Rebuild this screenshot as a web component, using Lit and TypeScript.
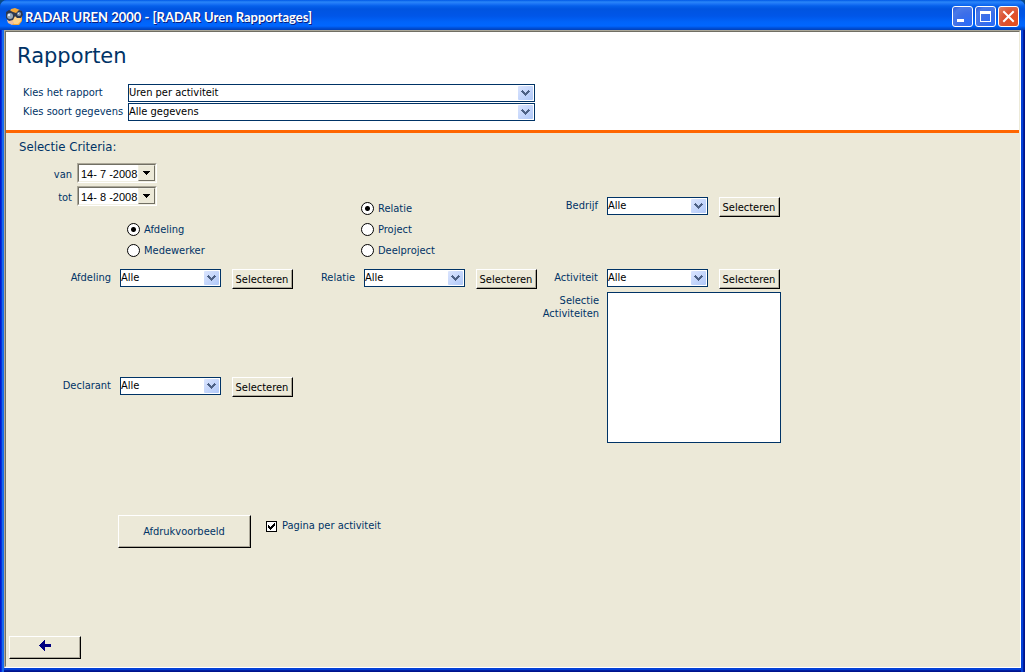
import { LitElement, html, css, svg } from "lit";
import { customElement, property, state } from "lit/decorators.js";

const shared = css`
  * {
    box-sizing: border-box;
  }
  button,
  select,
  input,
  textarea {
    font: inherit;
    margin: 0;
    border-radius: 0;
  }
  .push {
    background: #ece9d8;
    border: 1px solid;
    border-color: #fff #000 #000 #fff;
    box-shadow: inset -1px -1px 0 #aca899;
    color: #000;
    padding: 1px 1px 0 0;
    white-space: nowrap;
  }
`;

@customElement("combo-box")
class ComboBox extends LitElement {
  @property() label = "";
  @property({ type: Array }) options: string[] = [];

  static styles = [
    shared,
    css`
      :host {
        display: grid;
        background: #fff;
      }
      .field,
      .arrow {
        grid-area: 1 / 1;
      }
      .field {
        appearance: none;
        width: 100%;
        height: 18px;
        padding: 0 20px 0 0;
        border: 1px solid #003366;
        background: #fff;
        color: #000;
        line-height: 16px;
      }
      .arrow {
        justify-self: end;
        margin: 2px;
        pointer-events: none;
      }
    `,
  ];

  render() {
    return html`
      <select class="field" aria-label=${this.label}>
        ${this.options.map((o) => html`<option>${o}</option>`)}
      </select>
      <svg class="arrow" width="15" height="14" viewBox="0 0 15 14">
        <defs>
          <linearGradient id="g" x1="0" y1="0" x2="1" y2="1">
            <stop offset="0" stop-color="#dbe5fe" />
            <stop offset="1" stop-color="#b0c8f8" />
          </linearGradient>
        </defs>
        <rect width="15" height="14" rx="1" fill="url(#g)" />
        <path
          shape-rendering="crispEdges"
          fill="#4d6185"
          d="M4 4h1v1h1v1h1v1h1v-1h1v-1h1v-1h1v1h1v1h-1v1h-1v1h-1v1h-1v1h-1v-1h-1v-1h-1v-1h-1v-1h-1v-1h1z"
        />
      </svg>
    `;
  }
}

@customElement("pick-row")
class PickRow extends LitElement {
  @property() label = "";

  static styles = [
    shared,
    css`
      :host {
        display: flex;
        align-items: flex-start;
      }
      .caption {
        flex: 1;
        text-align: right;
        line-height: 18px;
        padding-right: 9px;
      }
      .combo {
        width: 101px;
        margin-right: 11px;
      }
      .push {
        width: 61px;
        height: 20px;
      }
    `,
  ];

  render() {
    return html`
      <span class="caption">${this.label}</span>
      <combo-box class="combo" .label=${this.label} .options=${["Alle"]}></combo-box>
      <button class="push" type="button">Selecteren</button>
    `;
  }
}

@customElement("radio-list")
class RadioList extends LitElement {
  @property() name = "";
  @property({ type: Array }) items: string[] = [];
  @state() private selected = 0;

  static styles = [
    shared,
    css`
      :host {
        display: flex;
        flex-direction: column;
      }
      .item {
        display: flex;
        align-items: center;
        gap: 4px;
        height: 21px;
      }
      .dot {
        appearance: none;
        width: 13px;
        height: 13px;
        border: 1px solid #000;
        border-radius: 50%;
        background: #fff;
      }
      .dot:checked {
        background: radial-gradient(circle, #000 2px, #fff 3px);
      }
    `,
  ];

  render() {
    return this.items.map(
      (item, i) => html`
        <label class="item">
          <input
            class="dot"
            type="radio"
            name=${this.name}
            .checked=${i === this.selected}
            @change=${() => (this.selected = i)}
          />
          ${item}
        </label>
      `,
    );
  }
}

@customElement("date-field")
class DateField extends LitElement {
  @property() label = "";
  @property() value = "";

  static styles = [
    shared,
    css`
      :host {
        display: block;
      }
      .row {
        display: flex;
        gap: 5px;
      }
      .caption {
        width: 66px;
        text-align: right;
        line-height: 24px;
        height: 20px;
      }
      .box {
        display: flex;
        width: 80px;
        height: 20px;
        border: 1px solid;
        border-color: #aca899 #fff #fff #aca899;
        background: #fff;
      }
      .inner {
        display: flex;
        flex: 1;
        min-width: 0;
        border: 1px solid;
        border-color: #716f64 #f1efe2 #f1efe2 #716f64;
      }
      .text {
        flex: 1;
        min-width: 0;
        border: 0;
        padding: 1px 0 0 2px;
        background: #fff;
        color: #000;
        font-family: "Liberation Sans", Arial, sans-serif;
        font-size: 11px;
      }
      .drop {
        display: flex;
        align-items: center;
        justify-content: center;
        width: 17px;
        padding: 0 1px 0 0;
        border: 1px solid;
        border-color: #f1efe2 #716f64 #716f64 #f1efe2;
        background: #ece9d8;
      }
    `,
  ];

  render() {
    return html`
      <div class="row">
        <label class="caption" for="d">${this.label}</label>
        <div class="box">
          <div class="inner">
            <input class="text" id="d" type="text" .value=${this.value} />
            <button class="drop" type="button" aria-label="Kalender">
              <svg width="7" height="4" viewBox="0 0 7 4" shape-rendering="crispEdges">
                <path d="M0 0h7v1h-1v1h-1v1h-1v1h-1v-1h-1v-1h-1v-1h-1z" />
              </svg>
            </button>
          </div>
        </div>
      </div>
    `;
  }
}

const minimizeGlyph = svg`<rect x="4" y="12" width="7" height="3" fill="#fff" />`;
const maximizeGlyph = svg`<path fill="#fff" fill-rule="evenodd" d="M4 4h11v11h-11z M5 7v7h9v-7z" />`;
const closeGlyph = svg`<path stroke="#fff" stroke-width="2" stroke-linecap="square" d="M5 5l9 9M14 5l-9 9" />`;

@customElement("app-root")
class AppRoot extends LitElement {
  static styles = [
    shared,
    css`
      :host {
        display: block;
        background: #0a4a86;
        color: #003366;
        font-family: "DejaVu Sans Condensed", Tahoma, "DejaVu Sans", sans-serif;
        font-size: 11px;
        line-height: 14px;
      }
      .window {
        display: flex;
        flex-direction: column;
        min-height: 100vh;
        border-radius: 7px 7px 0 0;
        overflow: hidden;
        background: #0848dd;
      }
      .titlebar {
        display: flex;
        align-items: center;
        gap: 2px;
        height: 30px;
        padding: 3px 6px 0 6px;
        background: linear-gradient(
          #0058e6 0,
          #2a86f8 2px,
          #1a72f5 4px,
          #0560ea 6px,
          #0054e0 9px,
          #0056e8 16px,
          #0064fa 22px,
          #0066ff 26px,
          #0050d8 28px,
          #0040b8 30px
        );
      }
      .caption {
        flex: 1;
        margin: 0;
        color: #fff;
        font-family: Lato, "Trebuchet MS", sans-serif;
        font-size: 13px;
        font-weight: 700;
        line-height: 20px;
        white-space: nowrap;
        text-shadow: 1px 1px 0 #0a1f80;
      }
      .control {
        width: 21px;
        height: 21px;
        padding: 0;
        border: 1px solid #fff;
        border-radius: 3px;
        background: radial-gradient(circle at 80% 85%, #2a6cf8, #3c6ee8 45%, #4a7ae8 75%, #2a58d8);
      }
      .close {
        background: radial-gradient(circle at 75% 80%, #e8501c, #dc5030 50%, #e07858 90%);
      }
      .control svg {
        display: block;
      }
      .frame {
        flex: 1;
        display: flex;
        padding: 0 4px 4px;
        background: linear-gradient(90deg, #0019cf 1px, #0831d9 1px 2px, #166aee 2px 4px, transparent 4px),
          linear-gradient(270deg, #00138c 1px, #001ea0 1px 2px, #0441d8 2px 4px, transparent 4px),
          linear-gradient(0deg, #00138c 1px, #001ea0 1px 2px, #0441d8 2px 4px, transparent 4px);
      }
      .client {
        flex: 1;
        display: flex;
        flex-direction: column;
        border: 1px solid;
        border-color: #aca899 #fff #fff #aca899;
        background: #ece9d8;
      }
      .inset {
        flex: 1;
        display: flex;
        flex-direction: column;
        border: 1px solid;
        border-color: #716f64 transparent transparent #716f64;
      }
      .top {
        height: 101px;
        padding: 12px 11px 0;
        background: #fff;
        border-bottom: 3px solid #ff6600;
      }
      .heading {
        margin: 0;
        font-family: "DejaVu Sans", Verdana, sans-serif;
        font-size: 21px;
        font-weight: 400;
        line-height: 24px;
      }
      .choices {
        display: grid;
        grid-template-columns: 105px 407px;
        row-gap: 1px;
        margin-top: 16px;
        padding-left: 6px;
      }
      .choice {
        line-height: 17px;
      }
      .criteria {
        display: grid;
        grid-template-columns: 287px 244px 243px;
        grid-template-rows: 136px auto;
      }
      .period {
        display: flex;
        flex-direction: column;
        gap: 3px;
      }
      .subheading {
        margin: 0;
        height: 27px;
        padding: 4px 0 0 13px;
        font-size: 13px;
        font-weight: 400;
        line-height: 20px;
      }
      .radios {
        margin-top: 10px;
        padding-left: 121px;
      }
      .relations {
        align-self: end;
        padding: 0 0 8px 68px;
      }
      .company {
        padding-top: 64px;
      }
      .stack {
        display: flex;
        flex-direction: column;
        gap: 88px;
      }
      .activities {
        display: flex;
        margin: 3px -1px 0 0;
      }
      .activities-label {
        flex: 1;
        padding-right: 8px;
        text-align: right;
        line-height: 13px;
        padding-top: 2px;
      }
      .list {
        display: block;
        width: 174px;
        height: 151px;
        padding: 1px;
        border: 1px solid #003366;
        background: #fff;
        resize: none;
      }
      .actions {
        display: flex;
        gap: 15px;
        margin-top: 72px;
        padding-left: 112px;
      }
      .preview {
        width: 133px;
        height: 33px;
        color: #003366;
      }
      .check {
        display: flex;
        align-items: center;
        gap: 5px;
        height: 22px;
      }
      .tick {
        appearance: none;
        width: 11px;
        height: 11px;
        border: 1px solid #000;
        background: #fff;
      }
      .tick:checked {
        background: #fff
          url("data:image/svg+xml,%3Csvg xmlns='http://www.w3.org/2000/svg' width='9' height='9' shape-rendering='crispEdges'%3E%3Cpath d='M1 3h1v1h1v1h1v-1h1v-1h1v-1h1v-1h1v3h-1v1h-1v1h-1v1h-1v1h-1v-1h-1v-1h-1z'/%3E%3C/svg%3E");
      }
      .footer {
        margin-top: auto;
        padding: 0 0 7px 3px;
      }
      .back {
        display: flex;
        align-items: center;
        justify-content: center;
        width: 72px;
        height: 23px;
        padding: 0 0 4px;
      }
    `,
  ];

  render() {
    return html`
      <main class="window">
        <header class="titlebar">
          <svg width="17" height="18" viewBox="0 0 17 18">
            <path fill="#f4a838" d="M5 1l4-1 5 2 2 5v6l-3 4h-6l-4-3-1-6z" />
            <path fill="#ffd48a" d="M7 9l7-1 1 5-3 3h-4l-2-3z" />
            <path fill="#f0c0a0" d="M1 12l4-1 3 4-2 2-4-2z" />
            <path fill="#2c3850" d="M0 4l3-2 4 2 3 1 3-3 3 1 1 4-2 3h-4l-2-2-2 4-4 1-3-3z" />
            <ellipse cx="4" cy="8" rx="3" ry="3" fill="#98a8b8" />
            <ellipse cx="13" cy="6" rx="2" ry="2" fill="#8c9cb0" />
            <path fill="#e4ecf4" d="M2 6h2v2h-2z M12 5h1v1h-1z" />
          </svg>
          <h1 class="caption">RADAR UREN 2000 - [RADAR Uren Rapportages]</h1>
          <button class="control" type="button" aria-label="Minimaliseren">
            <svg width="19" height="19" viewBox="0 0 19 19">${minimizeGlyph}</svg>
          </button>
          <button class="control" type="button" aria-label="Maximaliseren">
            <svg width="19" height="19" viewBox="0 0 19 19">${maximizeGlyph}</svg>
          </button>
          <button class="control close" type="button" aria-label="Sluiten">
            <svg width="19" height="19" viewBox="0 0 19 19">${closeGlyph}</svg>
          </button>
        </header>
        <div class="frame">
          <div class="client">
            <div class="inset">
              <section class="top">
                <h2 class="heading">Rapporten</h2>
                <div class="choices">
                  <span class="choice">Kies het rapport</span>
                  <combo-box label="Kies het rapport" .options=${["Uren per activiteit"]}></combo-box>
                  <span class="choice">Kies soort gegevens</span>
                  <combo-box label="Kies soort gegevens" .options=${["Alle gegevens"]}></combo-box>
                </div>
              </section>
              <section class="criteria">
                <div class="period">
                  <h3 class="subheading">Selectie Criteria:</h3>
                  <date-field label="van" value="14- 7 -2008"></date-field>
                  <date-field label="tot" value="14- 8 -2008"></date-field>
                  <radio-list class="radios" name="wie" .items=${["Afdeling", "Medewerker"]}></radio-list>
                </div>
                <radio-list
                  class="relations"
                  name="wat"
                  .items=${["Relatie", "Project", "Deelproject"]}
                ></radio-list>
                <pick-row class="company" label="Bedrijf"></pick-row>
                <div class="stack">
                  <pick-row label="Afdeling"></pick-row>
                  <pick-row label="Declarant"></pick-row>
                </div>
                <pick-row label="Relatie"></pick-row>
                <div>
                  <pick-row label="Activiteit"></pick-row>
                  <div class="activities">
                    <label class="activities-label" for="list">Selectie<br />Activiteiten</label>
                    <textarea class="list" id="list" readonly></textarea>
                  </div>
                </div>
              </section>
              <section class="actions">
                <button class="push preview" type="button">Afdrukvoorbeeld</button>
                <label class="check"><input class="tick" type="checkbox" checked />Pagina per activiteit</label>
              </section>
              <footer class="footer">
                <button class="push back" type="button" aria-label="Terug">
                  <svg width="12" height="11" viewBox="0 0 12 11" shape-rendering="crispEdges">
                    <path fill="#000080" d="M0 5h1v-1h1v-1h1v-1h1v-1h1v-1h1v4h6v3h-6v4h-1v-1h-1v-1h-1v-1h-1v-1h-1v-1h-1z" />
                  </svg>
                </button>
              </footer>
            </div>
          </div>
        </div>
      </main>
    `;
  }
}
